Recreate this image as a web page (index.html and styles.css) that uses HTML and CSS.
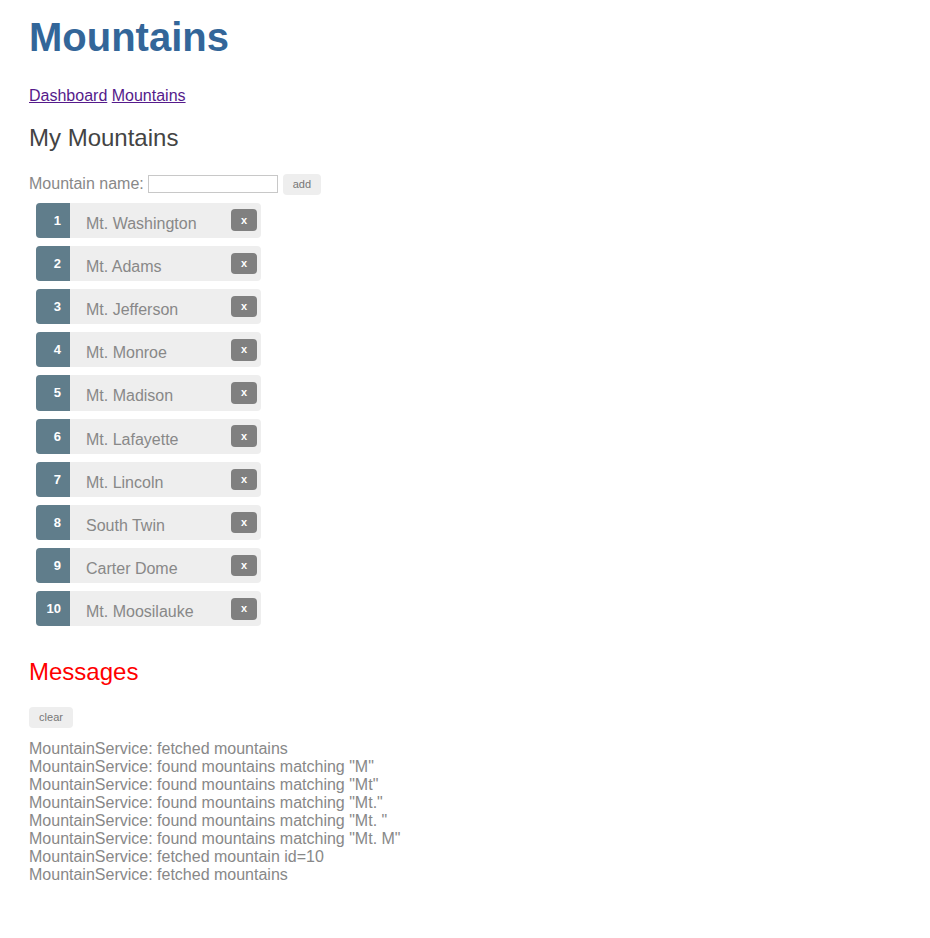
FILE: index.html
```html
<!DOCTYPE html>
<html>
<head>
<meta charset="utf-8">
<title>Mountains</title>
<link rel="stylesheet" href="styles.css">
</head>
<body>
<div class="app">
  <h1 class="title">Mountains</h1>
  <nav class="nav"><a href="#">Dashboard</a> <a href="#">Mountains</a></nav>
  <h2 class="section">My Mountains</h2>
  <div class="add-row">
    <label class="add-label">Mountain name:</label>
    <input class="add-input" type="text">
    <button class="btn">add</button>
  </div>
  <ul class="list">
    <li class="item"><span class="badge">1</span><span class="name">Mt. Washington</span><button class="delete">x</button></li>
    <li class="item"><span class="badge">2</span><span class="name">Mt. Adams</span><button class="delete">x</button></li>
    <li class="item"><span class="badge">3</span><span class="name">Mt. Jefferson</span><button class="delete">x</button></li>
    <li class="item"><span class="badge">4</span><span class="name">Mt. Monroe</span><button class="delete">x</button></li>
    <li class="item"><span class="badge">5</span><span class="name">Mt. Madison</span><button class="delete">x</button></li>
    <li class="item"><span class="badge">6</span><span class="name">Mt. Lafayette</span><button class="delete">x</button></li>
    <li class="item"><span class="badge">7</span><span class="name">Mt. Lincoln</span><button class="delete">x</button></li>
    <li class="item"><span class="badge">8</span><span class="name">South Twin</span><button class="delete">x</button></li>
    <li class="item"><span class="badge">9</span><span class="name">Carter Dome</span><button class="delete">x</button></li>
    <li class="item"><span class="badge">10</span><span class="name">Mt. Moosilauke</span><button class="delete">x</button></li>
  </ul>
  <h2 class="section messages-title">Messages</h2>
  <button class="btn clear">clear</button>
  <div class="messages">
    <div>MountainService: fetched mountains</div>
    <div>MountainService: found mountains matching "M"</div>
    <div>MountainService: found mountains matching "Mt"</div>
    <div>MountainService: found mountains matching "Mt."</div>
    <div>MountainService: found mountains matching "Mt. "</div>
    <div>MountainService: found mountains matching "Mt. M"</div>
    <div>MountainService: fetched mountain id=10</div>
    <div>MountainService: fetched mountains</div>
  </div>
</div>
</body>
</html>
```

FILE: styles.css
```css
* {
  font-family: "Liberation Sans", Arial, Helvetica, sans-serif;
}
html, body {
  margin: 0;
  padding: 0;
  background: #fff;
}
.app {
  padding: 0 29px;
  color: #888;
  font-size: 16px;
  line-height: 18px;
}
.title {
  margin: 14px 0 0;
  font-size: 40px;
  line-height: 46px;
  font-weight: bold;
  color: #369;
}
.nav {
  margin-top: 27px;
  line-height: 18px;
}
.nav a {
  color: #551a8b;
  text-decoration: underline;
}
.section {
  margin: 19px 0 0;
  font-size: 24px;
  line-height: 28px;
  font-weight: normal;
  color: #444;
}
.add-row {
  display: flex;
  align-items: center;
  margin-top: 21.6px;
  height: 21px;
}
.add-label {
  color: #888;
  margin-right: 4px;
}
.add-input {
  box-sizing: border-box;
  width: 130px;
  height: 18px;
  border: 1px solid #c8c8c8;
  padding: 0 2px;
  margin: 0 5px 0 0;
  font-size: 13px;
}
.btn {
  background-color: #eee;
  border: none;
  padding: 5px 10px;
  border-radius: 4px;
  font-size: 11px;
  line-height: 11px;
  color: #777;
  height: 21px;
  box-sizing: border-box;
}
.list {
  list-style: none;
  margin: 8px 0 0 7px;
  padding: 0;
  width: 225px;
  display: flex;
  flex-direction: column;
  gap: 8px;
}
.item {
  display: flex;
  align-items: center;
  height: 35.2px;
  background: #eee;
  border-radius: 4px;
}
.badge {
  align-self: stretch;
  box-sizing: border-box;
  width: 34px;
  background: #607d8b;
  color: #fff;
  font-size: 13px;
  font-weight: bold;
  display: flex;
  align-items: center;
  justify-content: flex-end;
  padding: 1px 9px 0 0;
  border-radius: 4px 0 0 4px;
}
.name {
  margin-left: 16px;
  padding-top: 7px;
  color: #888;
  font-size: 16px;
}
.delete {
  margin-left: auto;
  margin-right: 4px;
  width: 26px;
  height: 21.5px;
  border: none;
  border-radius: 4px;
  background: gray;
  color: #fff;
  font-size: 11px;
  font-weight: bold;
  padding: 0;
  line-height: 11px;
}
.messages-title {
  margin-top: 32px;
  color: #ff0000;
}
.clear {
  display: block;
  margin: 20.5px 0 0 0;
  width: 44px;
  padding: 5px 0;
}
.messages {
  margin-top: 11.8px;
  color: #888;
  line-height: 18px;
}
```
